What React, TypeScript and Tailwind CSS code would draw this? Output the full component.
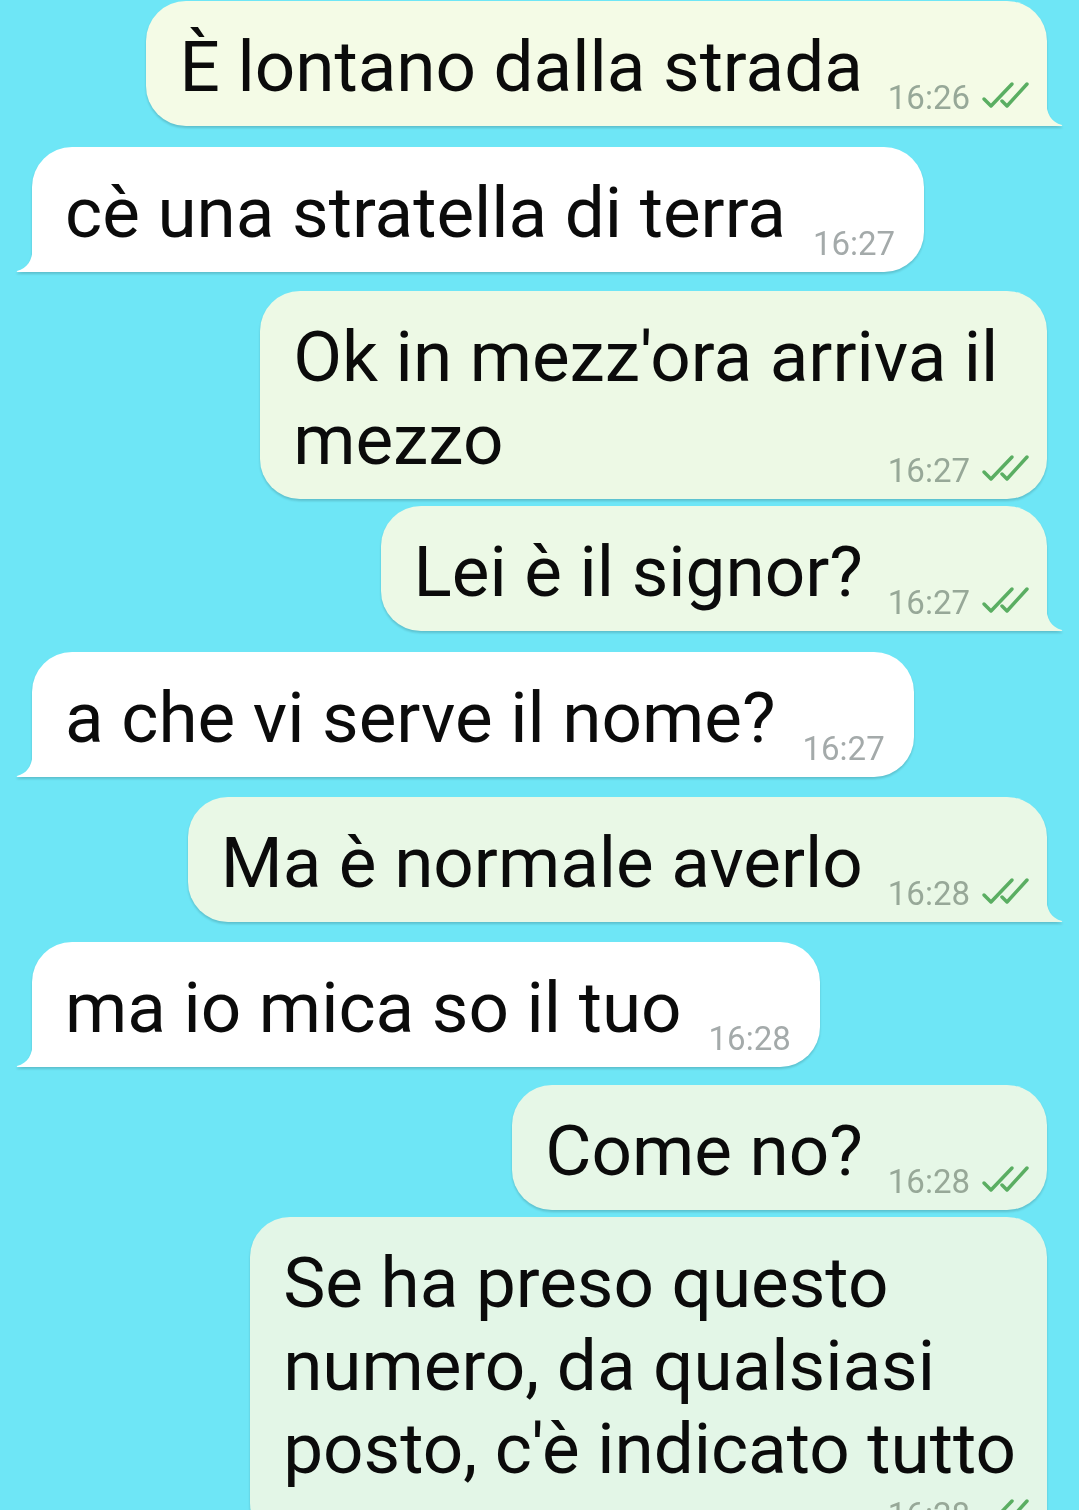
import clsx from 'clsx';

type Message = {
    out: boolean;
    lines: string[];
    time: string;
    tail: boolean;
    bg: string;
    fill: string;
    space: string;
    timeBelow?: boolean;
};

const messages: Message[] = [
    { out: true, lines: ['È lontano dalla strada'], time: '16:26', tail: true, bg: 'bg-[#f4fbe6]', fill: '#f4fbe6', space: 'mt-[1px]' },
    { out: false, lines: ['cè una stratella di terra'], time: '16:27', tail: true, bg: 'bg-white', fill: '#ffffff', space: 'mt-[21px]' },
    { out: true, lines: ["Ok in mezz'ora arriva il\u00a0", 'mezzo'], time: '16:27', tail: false, bg: 'bg-[#edf9e5]', fill: '#edf9e5', space: 'mt-[19px]' },
    { out: true, lines: ['Lei è il signor?'], time: '16:27', tail: true, bg: 'bg-[#ecf9e6]', fill: '#ecf9e6', space: 'mt-[7px]' },
    { out: false, lines: ['a che vi serve il nome?'], time: '16:27', tail: true, bg: 'bg-white', fill: '#ffffff', space: 'mt-[21px]' },
    { out: true, lines: ['Ma è normale averlo'], time: '16:28', tail: true, bg: 'bg-[#e9f8e6]', fill: '#e9f8e6', space: 'mt-[20px]' },
    { out: false, lines: ['ma io mica so il tuo'], time: '16:28', tail: true, bg: 'bg-white', fill: '#ffffff', space: 'mt-[20px]' },
    { out: true, lines: ['Come no?'], time: '16:28', tail: false, bg: 'bg-[#e6f7e7]', fill: '#e6f7e7', space: 'mt-[18px]' },
    {
        out: true,
        lines: ['Se ha preso questo', 'numero, da qualsiasi', "posto, c'è indicato tutto"],
        time: '16:28',
        tail: true,
        bg: 'bg-[#e3f6e7]',
        fill: '#e3f6e7',
        space: 'mt-[7px]',
        timeBelow: true,
    },
];

function DoubleTick() {
    return (
        <svg width="48" height="28" viewBox="0 0 48 28" className="ml-[11px] -translate-y-[3px]">
            <path d="M3 18 L10 25 L31 3" fill="none" stroke="#5aae62" strokeWidth="3.5" strokeLinecap="round" strokeLinejoin="round" />
            <path d="M21 20 L26 25 L46 3" fill="none" stroke="#5aae62" strokeWidth="3.5" strokeLinecap="round" strokeLinejoin="round" />
        </svg>
    );
}

function Stamp({ out, time }: { out: boolean; time: string }) {
    return (
        <div className="flex items-center -mb-[10px] shrink-0">
            <span className={clsx('text-[33px] leading-[40px]', out ? 'text-[#97a898]' : 'text-[#a4aaaa]')}>{time}</span>
            {out && <DoubleTick />}
        </div>
    );
}

function Bubble({ m }: { m: Message }) {
    const last = m.lines[m.lines.length - 1];
    const rest = m.lines.slice(0, -1);
    const linePad = m.out ? 'pr-[13px]' : '';

    return (
        <div
            className={clsx(
                'relative flex drop-shadow-[0_2px_1px_rgba(0,0,0,0.16)]',
                m.space,
                m.out ? 'self-end mr-[32px]' : 'self-start ml-[32px]'
            )}
        >
            <div
                className={clsx(
                    'rounded-[40px] pt-[24px] pb-[18px] pl-[33px]',
                    m.bg,
                    m.out ? 'pr-[18px]' : 'pr-[29px]',
                    m.tail && m.out && 'rounded-br-none',
                    m.tail && !m.out && 'rounded-bl-none'
                )}
            >
                {rest.map((line) => (
                    <div key={line} className={clsx('whitespace-pre text-[71px] leading-[83px] text-[#0b0b0b]', linePad)}>
                        {line}
                    </div>
                ))}
                {m.timeBelow ? (
                    <>
                        <div className={clsx('whitespace-pre text-[71px] leading-[83px] text-[#0b0b0b]', linePad)}>{last}</div>
                        <div className="flex justify-end mt-[5px]">
                            <Stamp out={m.out} time={m.time} />
                        </div>
                    </>
                ) : (
                    <div className="flex items-end justify-between">
                        <span className="whitespace-pre text-[71px] leading-[83px] text-[#0b0b0b]">{last}</span>
                        <div className={m.out ? 'ml-[25px]' : 'ml-[27px]'}>
                            <Stamp out={m.out} time={m.time} />
                        </div>
                    </div>
                )}
            </div>
            {m.tail && m.out && (
                <svg width="17" height="26" viewBox="0 0 17 26" className="absolute bottom-0 -right-[16px]">
                    <path d="M0 0 C0.5 14 5 22 16 25 Q17 26 15 26 L0 26 Z" fill={m.fill} />
                </svg>
            )}
            {m.tail && !m.out && (
                <svg width="18" height="26" viewBox="0 0 18 26" className="absolute bottom-0 -left-[17px]">
                    <path d="M18 0 C17.5 14 13 22 2 25 Q1 26 3 26 L18 26 Z" fill={m.fill} />
                </svg>
            )}
        </div>
    );
}

export default function App() {
    return (
        <div className="w-full h-[1510px] overflow-hidden bg-[#6ee6f6] font-[Roboto,sans-serif] flex flex-col">
            {messages.map((m, i) => (
                <Bubble key={i} m={m} />
            ))}
        </div>
    );
}
